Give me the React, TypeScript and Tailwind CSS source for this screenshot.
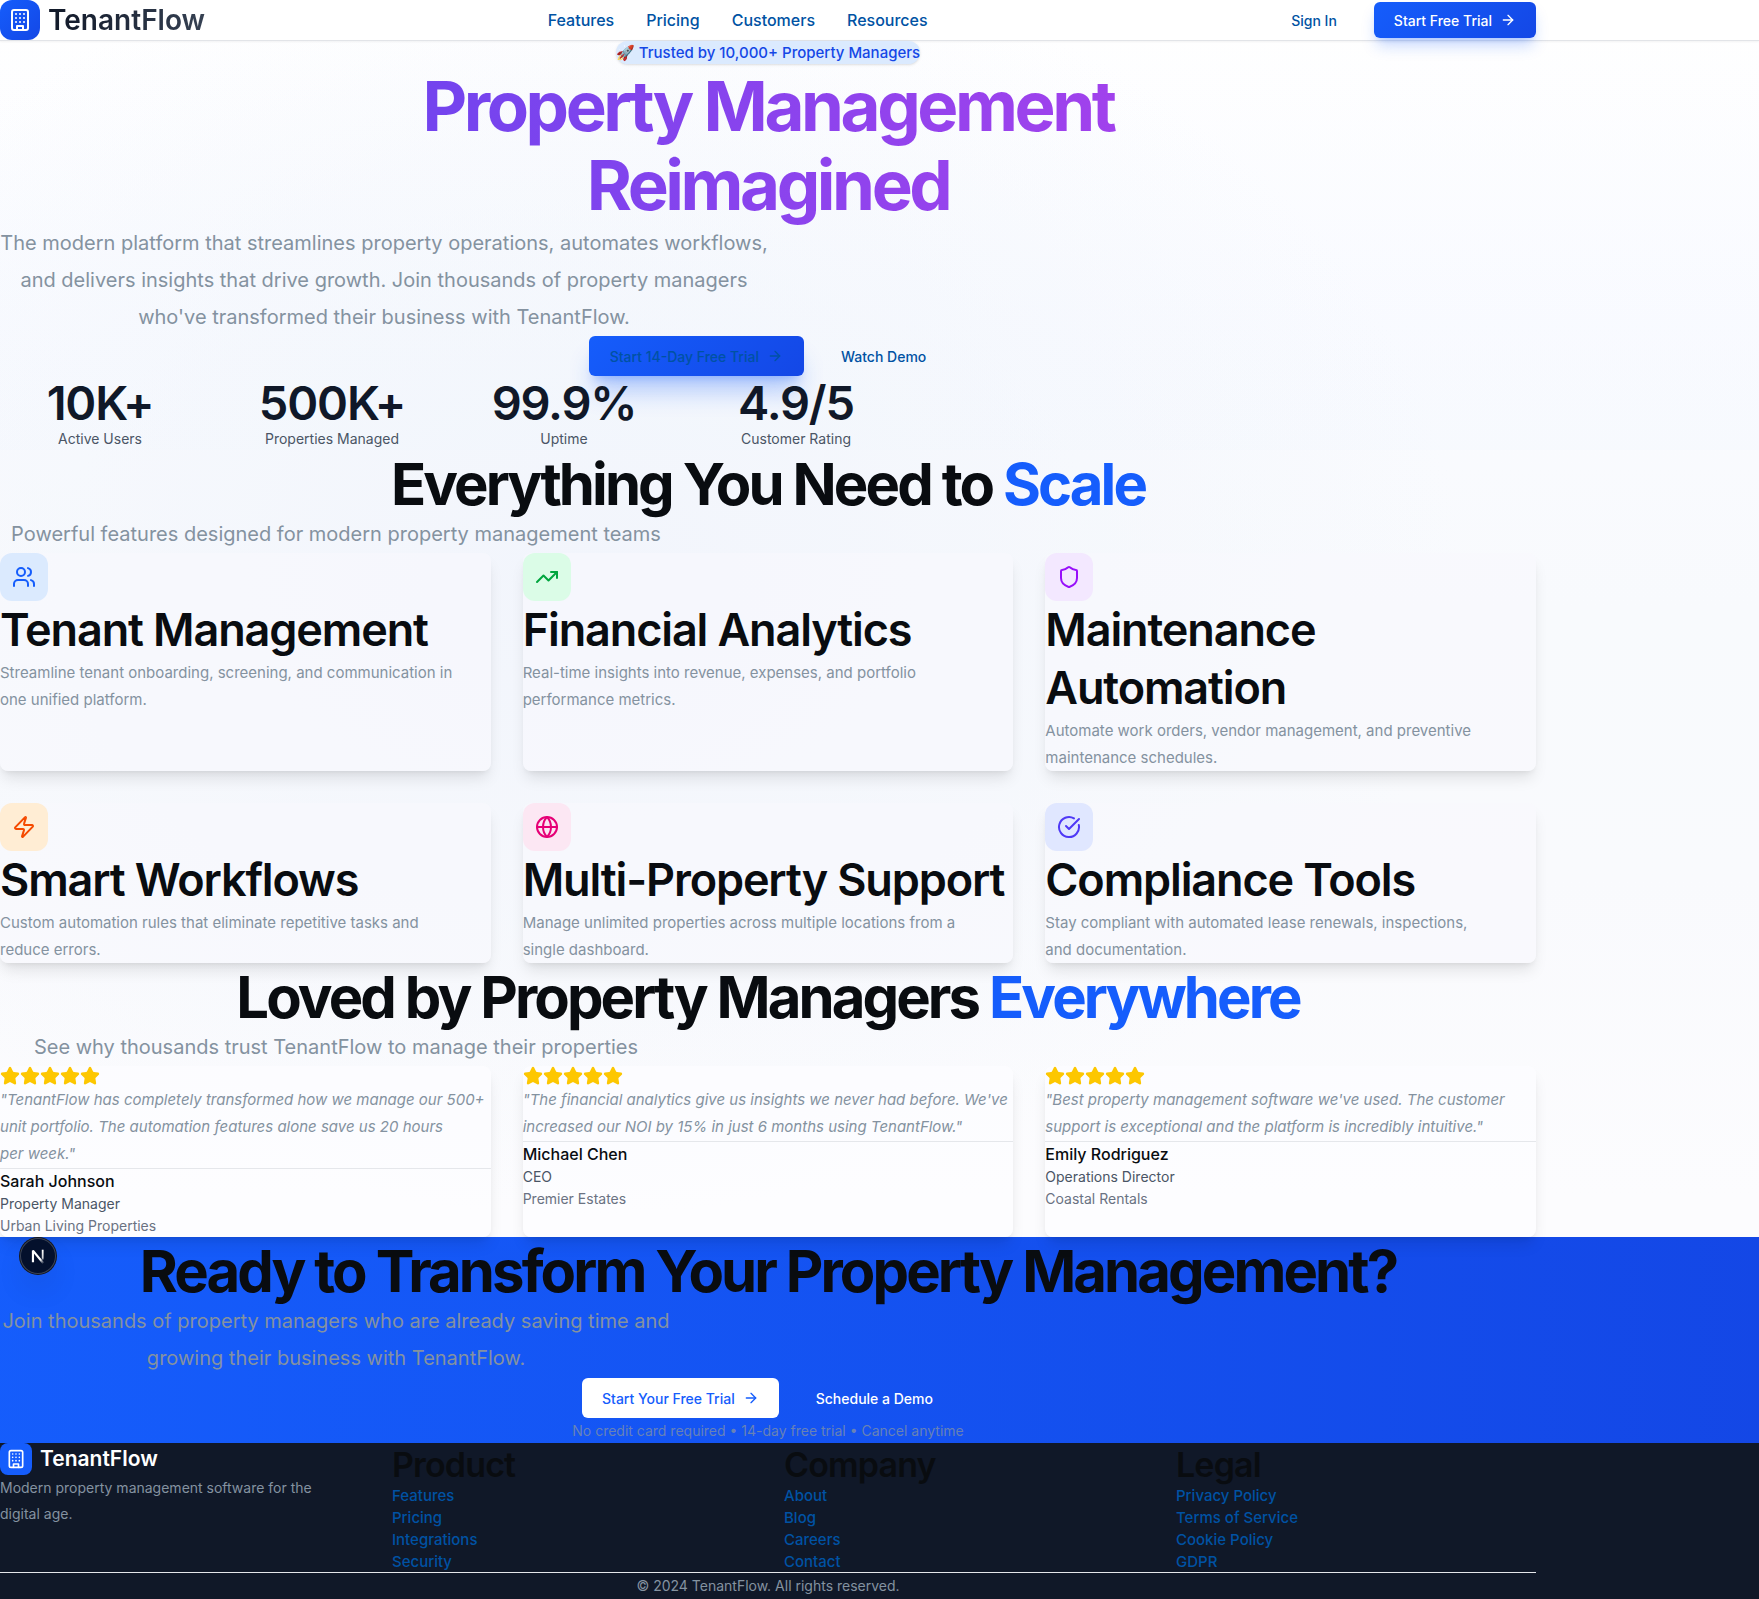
import React from "react";
import {
  ArrowRight,
  CircleCheckBig,
  Globe,
  Shield,
  Star,
  TrendingUp,
  Users,
  Zap,
  type LucideIcon,
} from "lucide-react";

const navLinks = ["Features", "Pricing", "Customers", "Resources"];

const stats = [
  { value: "10K+", label: "Active Users" },
  { value: "500K+", label: "Properties Managed" },
  { value: "99.9%", label: "Uptime" },
  { value: "4.9/5", label: "Customer Rating" },
];

type Feature = { icon: LucideIcon; tile: string; title: string; text: string };

const features: Feature[] = [
  {
    icon: Users,
    tile: "bg-blue-100 text-blue-600",
    title: "Tenant Management",
    text: "Streamline tenant onboarding, screening, and communication in one unified platform.",
  },
  {
    icon: TrendingUp,
    tile: "bg-green-100 text-green-600",
    title: "Financial Analytics",
    text: "Real-time insights into revenue, expenses, and portfolio performance metrics.",
  },
  {
    icon: Shield,
    tile: "bg-purple-100 text-purple-600",
    title: "Maintenance Automation",
    text: "Automate work orders, vendor management, and preventive maintenance schedules.",
  },
  {
    icon: Zap,
    tile: "bg-orange-100 text-orange-600",
    title: "Smart Workflows",
    text: "Custom automation rules that eliminate repetitive tasks and reduce errors.",
  },
  {
    icon: Globe,
    tile: "bg-pink-100 text-pink-600",
    title: "Multi-Property Support",
    text: "Manage unlimited properties across multiple locations from a single dashboard.",
  },
  {
    icon: CircleCheckBig,
    tile: "bg-indigo-100 text-indigo-600",
    title: "Compliance Tools",
    text: "Stay compliant with automated lease renewals, inspections, and\u00a0documentation.",
  },
];

const testimonials = [
  {
    quote:
      "TenantFlow has completely transformed how we manage our 500+ unit portfolio. The automation features alone save us 20 hours per week.",
    name: "Sarah Johnson",
    role: "Property Manager",
    company: "Urban Living Properties",
  },
  {
    quote:
      "The financial analytics give us insights we never had before. We've increased our NOI by 15% in just 6 months using TenantFlow.",
    name: "Michael Chen",
    role: "CEO",
    company: "Premier Estates",
  },
  {
    quote:
      "Best property management software we've used. The customer support is exceptional and the platform is incredibly intuitive.",
    name: "Emily Rodriguez",
    role: "Operations Director",
    company: "Coastal Rentals",
  },
];

const footerColumns = [
  { title: "Product", links: ["Features", "Pricing", "Integrations", "Security"] },
  { title: "Company", links: ["About", "Blog", "Careers", "Contact"] },
  { title: "Legal", links: ["Privacy Policy", "Terms of Service", "Cookie Policy", "GDPR"] },
];

function BuildingIcon({ className }: { className: string }) {
  return (
    <svg viewBox="0 0 24 24" fill="none" stroke="currentColor" strokeWidth="2" strokeLinecap="round" strokeLinejoin="round" className={className} aria-hidden="true">
      <rect x="4" y="2" width="16" height="20" rx="2" />
      <path d="M9 22v-4h6v4" />
      <path d="M8 6h.01M12 6h.01M16 6h.01M8 10h.01M12 10h.01M16 10h.01M8 14h.01M12 14h.01M16 14h.01" />
    </svg>
  );
}

function DevBadge() {
  return (
    <button
      type="button"
      aria-label="Open developer tools"
      className="absolute top-px left-5 z-20 flex size-9 items-center justify-center rounded-full bg-[#04102c] shadow-[0_0_0_1px_#171717,inset_0_0_0_1px_#3b4356,0_16px_32px_-8px_rgba(0,0,0,0.24)]"
    >
      <svg viewBox="0 0 40 40" className="size-9" fill="none" aria-hidden="true">
        <defs>
          <linearGradient id="stem" x1="0" y1="14" x2="0" y2="27" gradientUnits="userSpaceOnUse">
            <stop stopColor="#fff" />
            <stop offset="0.6" stopColor="#fff" stopOpacity="0.8" />
            <stop offset="1" stopColor="#fff" stopOpacity="0" />
          </linearGradient>
          <linearGradient id="slash" x1="15" y1="14" x2="26" y2="28" gradientUnits="userSpaceOnUse">
            <stop stopColor="#fff" />
            <stop offset="0.7" stopColor="#fff" />
            <stop offset="1" stopColor="#fff" stopOpacity="0.1" />
          </linearGradient>
        </defs>
        <path d="M25.2 13v11" stroke="url(#stem)" strokeWidth="2" />
        <path d="M14.4 27V14l11.5 14" stroke="url(#slash)" strokeWidth="2.4" strokeLinejoin="bevel" />
      </svg>
    </button>
  );
}

function SectionHeading({ children }: { children: React.ReactNode }) {
  return (
    <h2 className="pt-0.5 text-center text-[58px] leading-16 font-bold tracking-tighter text-[#090c10]">
      {children}
    </h2>
  );
}

export default function App() {
  return (
    <div className="min-h-screen bg-white bg-[radial-gradient(ellipse_50%_40%_at_33%_36%,#f2f5fc_0%,#f3f6fccc_35%,transparent_100%),linear-gradient(to_bottom,#ffffff_0%,#fafbff_20%,#f8fafd_38%,#f9fafd_55%,#fcfcfe_75%)] font-['Inter',sans-serif] text-[16px] text-[#090c10]">
      <header className="border-b border-[#e2e4e8] bg-white shadow-xs">
        <div className="flex max-w-screen-2xl items-center justify-between">
          <div className="flex items-center gap-2">
            <div className="flex size-10 items-center justify-center rounded-xl bg-linear-135 from-blue-600 to-blue-700 text-white">
              <BuildingIcon className="size-6" />
            </div>
            <span className="bg-linear-to-r from-gray-900 to-gray-700 bg-clip-text text-[28px] leading-9 font-semibold text-transparent">
              TenantFlow
            </span>
          </div>
          <nav className="flex items-center gap-8">
            {navLinks.map((l) => (
              <a key={l} href="#" className="font-medium text-[#0052a3]">
                {l}
              </a>
            ))}
          </nav>
          <div className="flex items-center gap-4">
            <button type="button" className="h-9 px-[21px] text-[14px] font-medium text-[#0052a3]">
              Sign In
            </button>
            <button
              type="button"
              className="flex h-9 items-center gap-2 rounded-md bg-linear-135 from-blue-600 to-blue-700 px-5 text-[14px] font-medium text-white shadow-lg shadow-blue-600/25"
            >
              Start Free Trial
              <ArrowRight className="size-4" />
            </button>
          </div>
        </div>
      </header>

      <section className="bg-linear-to-b from-transparent to-blue-50/20">
        <div className="max-w-screen-2xl">
          <div className="flex h-[26px] items-start justify-center">
            <span className="rounded-full bg-blue-100 text-[15px] leading-[23px] font-medium text-blue-700 shadow-sm">
              🚀 Trusted by 10,000+ Property Managers
            </span>
          </div>
          <h1 className="bg-linear-to-r from-[#5441ef] to-[#bc3beb] bg-clip-text text-center text-[69px] leading-[79px] font-bold tracking-tighter text-transparent">
            Property Management
            <br />
            Reimagined
          </h1>
          <p className="max-w-3xl text-center text-[20px] leading-[37px] text-[#8492a0]">
            The modern platform that streamlines property operations, automates workflows,
            <br />
            and delivers insights that drive growth. Join thousands of property managers
            <br />
            who've transformed their business with TenantFlow.
          </p>
          <div className="flex justify-center gap-4">
            <button
              type="button"
              className="flex h-10 items-center gap-2 rounded-md bg-linear-135 from-blue-600 to-blue-700 px-[21px] text-[14px] font-medium text-[#0052a3] shadow-xl shadow-blue-600/30"
            >
              Start 14-Day Free Trial
              <ArrowRight className="size-4" />
            </button>
            <button type="button" className="h-10 px-[21px] text-[14px] font-medium text-[#0052a3]">
              Watch Demo
            </button>
          </div>
          <dl className="grid max-w-4xl grid-cols-4 gap-8 text-center">
            {stats.map((s) => (
              <div key={s.label} className="flex flex-col-reverse">
                <dt className="text-[14px] leading-[22px] text-gray-600">{s.label}</dt>
                <dd className="pt-px text-[47px] leading-[51px] font-semibold tracking-tight text-gray-900">
                  {s.value}
                </dd>
              </div>
            ))}
          </dl>
        </div>
      </section>

      <section>
        <div className="max-w-screen-2xl">
          <SectionHeading>
            Everything You Need to <span className="text-blue-600">Scale</span>
          </SectionHeading>
          <p className="max-w-2xl text-center text-[20px] leading-[37px] text-[#8492a0]">
            Powerful features designed for modern property management teams
          </p>
          <div className="grid grid-cols-3 gap-8">
            {features.map(({ icon: Icon, tile, title, text }) => (
              <article key={title} className="rounded-lg bg-[#f8f9fd]/60 shadow-lg">
                <div className={`flex size-12 items-center justify-center rounded-xl ${tile}`}>
                  <Icon className="size-6" />
                </div>
                <h3 className="text-[45px] leading-[58px] font-semibold tracking-tight">{title}</h3>
                <p className="pr-8 text-[15px] leading-[27px] text-[#8492a0]">{text}</p>
              </article>
            ))}
          </div>
        </div>
      </section>

      <section>
        <div className="max-w-screen-2xl">
          <SectionHeading>
            Loved by Property Managers <span className="text-blue-600">Everywhere</span>
          </SectionHeading>
          <p className="max-w-2xl text-center text-[20px] leading-[37px] text-[#8492a0]">
            See why thousands trust TenantFlow to manage their properties
          </p>
          <div className="grid grid-cols-3 gap-8">
            {testimonials.map((t) => (
              <figure key={t.name} className="relative z-10 rounded-lg bg-[#fdfdff]/80 shadow-lg">
                <div className="flex" role="img" aria-label="5 out of 5 stars">
                  {[1, 2, 3, 4, 5].map((n) => (
                    <Star key={n} className="size-5 fill-yellow-400 text-yellow-400" />
                  ))}
                </div>
                <blockquote className="pb-px text-[15px] leading-[27px] text-pretty text-[#8492a0] italic">
                  {`"${t.quote}"`}
                </blockquote>
                <figcaption className="border-t border-gray-200">
                  <div className="leading-6 font-medium">{t.name}</div>
                  <div className="text-[14px] leading-[22px] text-gray-600">{t.role}</div>
                  <div className="text-[14px] leading-[22px] text-gray-500">{t.company}</div>
                </figcaption>
              </figure>
            ))}
          </div>
        </div>
      </section>

      <section className="relative bg-linear-to-r from-blue-600 to-blue-700">
        <DevBadge />
        <div className="max-w-screen-2xl">
          <SectionHeading>Ready to Transform Your Property Management?</SectionHeading>
          <p className="max-w-2xl pb-px text-center text-[20px] leading-[37px] text-[#8492a0]">
            Join thousands of property managers who are already saving time and
            <br />
            growing their business with TenantFlow.
          </p>
          <div className="flex justify-center gap-4">
            <button
              type="button"
              className="flex h-10 items-center gap-2 rounded-md bg-white px-5 text-[14px] font-medium text-blue-600"
            >
              Start Your Free Trial
              <ArrowRight className="size-4" />
            </button>
            <button type="button" className="h-10 px-[21px] text-[14px] font-medium text-white">
              Schedule a Demo
            </button>
          </div>
          <p className="text-center text-[14px] leading-[25px] text-[#8492a0]/75">
            No credit card required • 14-day free trial • Cancel anytime
          </p>
        </div>
      </section>

      <footer className="bg-gray-900">
        <div className="max-w-screen-2xl">
          <div className="grid grid-cols-4 gap-8">
            <div>
              <div className="flex items-center gap-2">
                <div className="flex size-8 items-center justify-center rounded-lg bg-blue-600 text-white">
                  <BuildingIcon className="size-5" />
                </div>
                <span className="text-[21px] leading-8 font-semibold text-white">TenantFlow</span>
              </div>
              <p className="text-[14px] leading-[26px] text-[#8492a0]">
                Modern property management software for the
                <br />
                digital age.
              </p>
            </div>
            {footerColumns.map((c) => (
              <nav key={c.title} aria-label={c.title}>
                <h4 className="pt-px text-[34px] leading-[41px] font-semibold tracking-tight">{c.title}</h4>
                <ul className="flex flex-col gap-px">
                  {c.links.map((l) => (
                    <li key={l} className="flex h-[21px] items-center">
                      <a href="#" className="text-[15px] leading-[21px] font-medium text-[#0052a3]">
                        {l}
                      </a>
                    </li>
                  ))}
                </ul>
              </nav>
            ))}
          </div>
          <p className="border-t border-gray-200 text-center text-[14px] leading-[26px] text-[#8492a0]">
            © 2024 TenantFlow. All rights reserved.
          </p>
        </div>
      </footer>
    </div>
  );
}
